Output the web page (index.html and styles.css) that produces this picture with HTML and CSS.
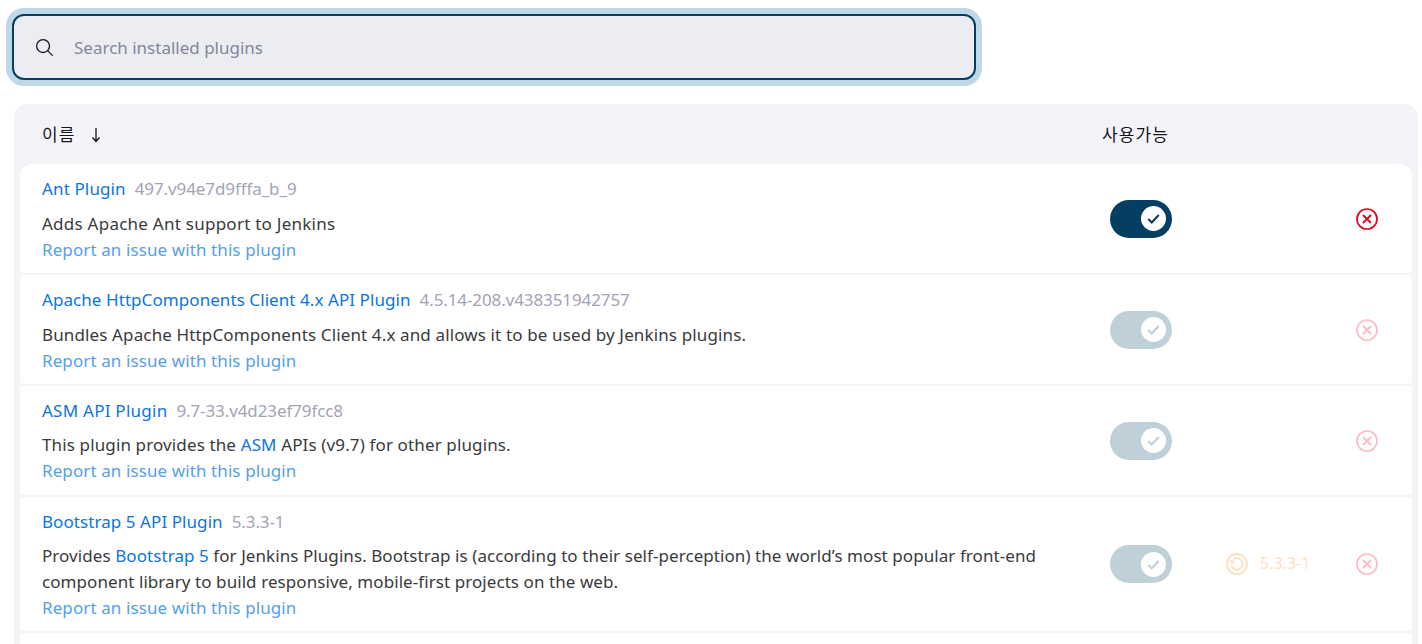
FILE: index.html
```html
<!DOCTYPE html>
<html lang="ko">
<head>
<meta charset="utf-8">
<title>Installed plugins</title>
<link rel="stylesheet" href="styles.css">
</head>
<body>
<div class="search">
  <svg class="search-icon" viewBox="0 0 512 512"><path d="M221 64a157 157 0 1 0 157 157A157 157 0 0 0 221 64z" fill="none" stroke="currentColor" stroke-width="32" stroke-miterlimit="10"/><path fill="none" stroke="currentColor" stroke-linecap="round" stroke-miterlimit="10" stroke-width="32" d="M338.29 338.29L448 448"/></svg>
  <input class="search-input" type="text" placeholder="Search installed plugins">
</div>
<div class="panel">
  <div class="head grid">
    <div class="col-name"><span class="head-label">이름</span><svg class="sort" viewBox="0 0 12 16"><path d="M6 1v13M2.500 10.500L6 14.500l3.500-4" fill="none" stroke="currentColor" stroke-width="1.300"/></svg></div>
    <div class="head-label">사용가능</div>
  </div>

  <div class="row grid">
    <div class="col-name">
      <div class="title"><a class="link" href="#">Ant Plugin</a><span class="version">497.v94e7d9fffa_b_9</span></div>
      <div class="desc spaced">Adds Apache Ant support to Jenkins</div>
      <a class="report" href="#">Report an issue with this plugin</a>
    </div>
    <div class="toggle"><span class="knob"><svg viewBox="0 0 24 24"><path d="M6 12.500l4 4L18 8" fill="none" stroke="currentColor" stroke-width="2.400"/></svg></span></div>
    <div></div>
    <svg class="remove" viewBox="0 0 22 22"><circle cx="11" cy="11" r="10" fill="none" stroke="currentColor" stroke-width="1.700"/><path d="M7 7l8 8M15 7l-8 8" fill="none" stroke="currentColor" stroke-width="1.800"/></svg>
  </div>

  <div class="row grid">
    <div class="col-name">
      <div class="title"><a class="link tight" href="#">Apache HttpComponents Client 4.x API Plugin</a><span class="version">4.5.14-208.v438351942757</span></div>
      <div class="desc">Bundles Apache HttpComponents Client 4.x and allows it to be used by Jenkins plugins.</div>
      <a class="report" href="#">Report an issue with this plugin</a>
    </div>
    <div class="toggle off"><span class="knob"><svg viewBox="0 0 24 24"><path d="M6 12.500l4 4L18 8" fill="none" stroke="currentColor" stroke-width="2.400"/></svg></span></div>
    <div></div>
    <svg class="remove off" viewBox="0 0 22 22"><circle cx="11" cy="11" r="10" fill="none" stroke="currentColor" stroke-width="1.700"/><path d="M7 7l8 8M15 7l-8 8" fill="none" stroke="currentColor" stroke-width="1.800"/></svg>
  </div>

  <div class="row grid">
    <div class="col-name">
      <div class="title"><a class="link spaced" href="#">ASM API Plugin</a><span class="version">9.7-33.v4d23ef79fcc8</span></div>
      <div class="desc">This plugin provides the <a class="link" href="#">ASM</a> APIs (v9.7) for other plugins.</div>
      <a class="report" href="#">Report an issue with this plugin</a>
    </div>
    <div class="toggle off"><span class="knob"><svg viewBox="0 0 24 24"><path d="M6 12.500l4 4L18 8" fill="none" stroke="currentColor" stroke-width="2.400"/></svg></span></div>
    <div></div>
    <svg class="remove off" viewBox="0 0 22 22"><circle cx="11" cy="11" r="10" fill="none" stroke="currentColor" stroke-width="1.700"/><path d="M7 7l8 8M15 7l-8 8" fill="none" stroke="currentColor" stroke-width="1.800"/></svg>
  </div>

  <div class="row grid">
    <div class="col-name">
      <div class="title"><a class="link tight" href="#">Bootstrap 5 API Plugin</a><span class="version">5.3.3-1</span></div>
      <div class="desc tight">Provides <a class="link" href="#">Bootstrap 5</a> for Jenkins Plugins. Bootstrap is (according to their self-perception) the world’s most popular front-end component library to build responsive, mobile-first projects on the web.</div>
      <a class="report" href="#">Report an issue with this plugin</a>
    </div>
    <div class="toggle off"><span class="knob"><svg viewBox="0 0 24 24"><path d="M6 12.500l4 4L18 8" fill="none" stroke="currentColor" stroke-width="2.400"/></svg></span></div>
    <div class="rollback">
      <svg class="rollback-icon" viewBox="0 0 22 22"><circle cx="11" cy="11" r="10" fill="none" stroke="currentColor" stroke-width="1.800"/><path d="M7.500 6.300A5.800 5.800 0 1 1 5.400 12.800" fill="none" stroke="currentColor" stroke-width="1.800"/><path d="M4 7l5 1-3.500 3.500z" fill="currentColor"/></svg>
      <span>5.3.3-1</span>
    </div>
    <svg class="remove off" viewBox="0 0 22 22"><circle cx="11" cy="11" r="10" fill="none" stroke="currentColor" stroke-width="1.700"/><path d="M7 7l8 8M15 7l-8 8" fill="none" stroke="currentColor" stroke-width="1.800"/></svg>
  </div>

  <div class="row row-empty"></div>
</div>
</body>
</html>
```

FILE: styles.css
```css
* { box-sizing: border-box; }

html, body {
  height: 644px;
  margin: 0;
  overflow: hidden;
  background: #fff;
}

body {
  padding-top: 14px;
  font-family: "Noto Sans", "Noto Sans CJK KR", sans-serif;
  font-size: 17px;
  line-height: 25.6px;
  letter-spacing: 0.13px;
  color: #3a3a3a;
}

.search {
  display: flex;
  align-items: center;
  gap: 19px;
  width: 964px;
  height: 66px;
  margin: 0 0 24px 12px;
  padding-left: 20px;
  background: #ecedf2;
  border: 2px solid #043e63;
  border-radius: 12px;
  box-shadow: 0 0 0 6px #bfd8e6;
  color: #14141f;
}

.search-icon {
  flex: none;
  width: 21px;
  height: 21px;
}

.search-input {
  flex: 1;
  border: 0;
  outline: 0;
  padding: 1px 0 0;
  background: transparent;
  font: inherit;
  letter-spacing: 0;
  color: inherit;
}

.search-input::placeholder {
  color: #85859a;
  opacity: 1;
}

.panel {
  height: 540px;
  margin: 0 4px 0 14px;
  padding: 0 6px;
  background: #f3f3f8;
  border-radius: 14px 14px 0 0;
  overflow: hidden;
}

.grid {
  display: grid;
  grid-template-columns: 1082px 124px 130px 1fr;
  align-items: center;
}

.head {
  height: 60.400px;
  padding-top: 1px;
  color: #14141f;
}

.head .col-name {
  display: flex;
  align-items: center;
}

.head-label {
  font-size: 17px;
  letter-spacing: 1.100px;
  font-weight: 400;
}

.sort {
  width: 12px;
  height: 16px;
  margin-left: 15px;
}

.row {
  background: #fff;
  border-radius: 4px;
  margin-bottom: 2px;
}

.head + .row {
  border-radius: 12px 12px 4px 4px;
}

.row-empty {
  height: 60px;
}

.col-name {
  padding-left: 22px;
}

.row .col-name {
  padding: 11.600px 50px 10.950px 22px;
}

.title {
  display: flex;
  gap: 9px;
  margin-bottom: 9.180px;
}

.link {
  color: #0b75e0;
  text-decoration: none;
}

.version {
  color: #a3a3b3;
  letter-spacing: -0.1px;
}

.spaced {
  letter-spacing: 0.25px;
}

.tight {
  letter-spacing: 0.07px;
}

.report {
  display: block;
  margin-top: 0.370px;
  color: #55a0ec;
  text-decoration: none;
  letter-spacing: 0.1px;
}

.toggle {
  display: flex;
  align-items: center;
  justify-content: flex-end;
  width: 62px;
  height: 38px;
  margin-left: 8px;
  padding-right: 6px;
  border-radius: 19px;
  background: #043e63;
  color: #043e63;
}

.toggle.off {
  background: #c0d0d8;
  color: #c0d0d8;
}

.knob {
  display: flex;
  align-items: center;
  justify-content: center;
  width: 25px;
  height: 25px;
  border-radius: 50%;
  background: #fff;
}

.knob svg {
  width: 21px;
  height: 21px;
}

.rollback {
  display: flex;
  align-items: center;
  gap: 12px;
  font-size: 16px;
  letter-spacing: 0;
  color: #ffdfc2;
}

.rollback-icon {
  width: 22px;
  height: 22px;
}

.remove {
  width: 22px;
  height: 22px;
  color: #e6001f;
}

.remove.off {
  color: #fbbcc4;
}
```
